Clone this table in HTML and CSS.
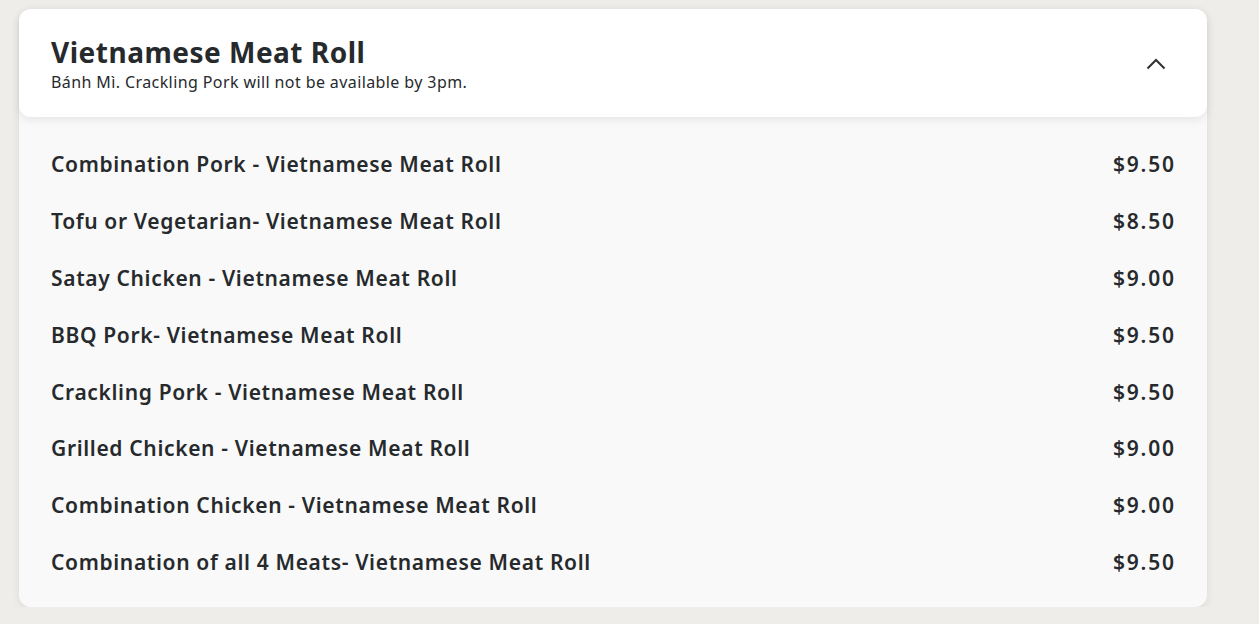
FILE: index.html
```html
<!DOCTYPE html>
<html lang="en">
<head>
    <meta charset="UTF-8">
    <meta name="viewport" content="width=device-width, initial-scale=1.0">
    <title>Vietnamese Meat Roll</title>
    <link rel="stylesheet" href="styles.css">
</head>
<body>
    <div class="menu-sekcja">
        <div class="naglowek">
            <div>
                <h2 class="tytul">Vietnamese Meat Roll</h2>
                <div class="opis">Bánh Mì. Crackling Pork will not be available by 3pm.</div>
            </div>
            <svg class="strzalka" width="24" height="24" viewBox="0 0 24 24">
                <path d="M3.5 15.5 L12 7 L20.5 15.5" fill="none" stroke="#2d3133" stroke-width="2"/>
            </svg>
        </div>
        <div class="lista">
            <div class="pozycja"><span>Combination Pork - Vietnamese Meat Roll</span><span class="cena">$9.50</span></div>
            <div class="pozycja"><span>Tofu or Vegetarian- Vietnamese Meat Roll</span><span class="cena">$8.50</span></div>
            <div class="pozycja"><span>Satay Chicken - Vietnamese Meat Roll</span><span class="cena">$9.00</span></div>
            <div class="pozycja"><span>BBQ Pork- Vietnamese Meat Roll</span><span class="cena">$9.50</span></div>
            <div class="pozycja"><span>Crackling Pork - Vietnamese Meat Roll</span><span class="cena">$9.50</span></div>
            <div class="pozycja"><span>Grilled Chicken - Vietnamese Meat Roll</span><span class="cena">$9.00</span></div>
            <div class="pozycja"><span>Combination Chicken - Vietnamese Meat Roll</span><span class="cena">$9.00</span></div>
            <div class="pozycja"><span>Combination of all 4 Meats- Vietnamese Meat Roll</span><span class="cena">$9.50</span></div>
        </div>
    </div>
</body>
</html>
```

FILE: styles.css
```css
body {
    font-family: "Noto Sans", "Open Sans", sans-serif;
    margin: 0;
    padding: 9px 52px 0 19px;
    background-color: #eeede9;
    color: #262a2d;
}

.menu-sekcja {
    background-color: #f9f9f9;
    border-radius: 12px;
    box-shadow: 0 2px 8px rgba(0, 0, 0, 0.08);
}

.naglowek {
    display: flex;
    justify-content: space-between;
    align-items: center;
    height: 108px;
    box-sizing: border-box;
    padding: 1px 39px 0 32px;
    background-color: #fff;
    border-radius: 12px;
    box-shadow: 0 3px 10px rgba(0, 0, 0, 0.08);
    position: relative;
}

.tytul {
    margin: 0;
    font-size: 28px;
    line-height: 34px;
    font-weight: 700;
    letter-spacing: 0.5px;
}

.opis {
    font-size: 16px;
    line-height: 20px;
    margin-top: 3px;
    letter-spacing: 0.4px;
}

.strzalka {
    display: block;
    margin-top: 2px;
}

.lista {
    padding: 18.5px 33px 16.5px 32px;
}

.pozycja {
    display: flex;
    justify-content: space-between;
    align-items: center;
    height: 56.9px;
    font-size: 21px;
    font-weight: 600;
    letter-spacing: 0.65px;
}

.cena {
    letter-spacing: 1.8px;
    margin-right: -1.8px;
}
```
